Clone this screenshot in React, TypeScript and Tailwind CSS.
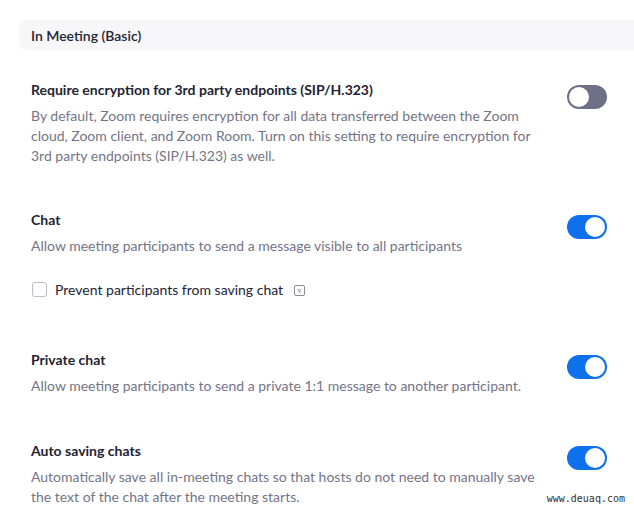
import React from "react";

type Row = {
  title: string;
  desc: string;
  on: boolean;
  extra?: React.ReactNode;
  gap: string;
};

const Toggle = ({ on }: { on: boolean }) => (
  <div
    className={
      on
        ? "mt-[5px] w-[40px] h-[24px] rounded-full bg-[#0e71eb] flex items-center justify-end pr-[2px] shrink-0"
        : "mt-[5px] w-[40px] h-[24px] rounded-full bg-[#6e7087] flex items-center justify-start pl-[2px] shrink-0"
    }
  >
    <div className="w-[20px] h-[20px] rounded-full bg-white" />
  </div>
);

const SavingOption = () => (
  <div className="mt-[23px] flex items-center">
    <div className="w-[15px] h-[15px] rounded-[3px] border border-[#bdbdc7] bg-white ml-[1px]" />
    <span className="ml-[8px] text-[14px] text-[#232333]">Prevent participants from saving chat</span>
    <span className="ml-[11px] mt-[2px] w-[11px] h-[11px] rounded-[2px] border border-[#8a8a99] flex items-center justify-center font-['Liberation_Serif',serif] text-[8px] leading-none text-[#6e6e80]">
      v
    </span>
  </div>
);

const rows: Row[] = [
  {
    title: "Require encryption for 3rd party endpoints (SIP/H.323)",
    desc: "By default, Zoom requires encryption for all data transferred between the Zoom cloud, Zoom client, and Zoom Room. Turn on this setting to require encryption for 3rd party endpoints (SIP/H.323) as well.",
    on: false,
    gap: "mt-[30px]",
  },
  {
    title: "Chat",
    desc: "Allow meeting participants to send a message visible to all participants",
    on: true,
    extra: <SavingOption />,
    gap: "mt-[44px]",
  },
  {
    title: "Private chat",
    desc: "Allow meeting participants to send a private 1:1 message to another participant.",
    on: true,
    gap: "mt-[50px]",
  },
  {
    title: "Auto saving chats",
    desc: "Automatically save all in-meeting chats so that hosts do not need to manually save the text of the chat after the meeting starts.",
    on: true,
    gap: "mt-[45px]",
  },
];

export default function App() {
  return (
    <div className="relative w-[634px] h-[509px] overflow-hidden bg-white font-['Lato','Noto_Sans',sans-serif]">
      <div className="ml-[19px] mt-[20px] h-[30px] rounded-l-[8px] bg-[#f7f7fa] pl-[12px] flex items-center text-[14px] font-semibold text-[#232333]">
        In Meeting (Basic)
      </div>

      <div className="pl-[31px] pr-[27px]">
        {rows.map((row) => (
          <div key={row.title} className={`${row.gap} flex items-start justify-between`}>
            <div className="w-[512px]">
              <div className="text-[14px] leading-[20px] font-bold text-[#232333]">{row.title}</div>
              <div className="mt-[6px] text-[14px] leading-[20px] text-[#747487]">{row.desc}</div>
              {row.extra}
            </div>
            <Toggle on={row.on} />
          </div>
        ))}
      </div>

      <div className="absolute right-[9px] bottom-[3px] font-['DejaVu_Sans_Mono',monospace] text-[10px] text-[#333]">
        www.deuaq.com
      </div>
    </div>
  );
}
